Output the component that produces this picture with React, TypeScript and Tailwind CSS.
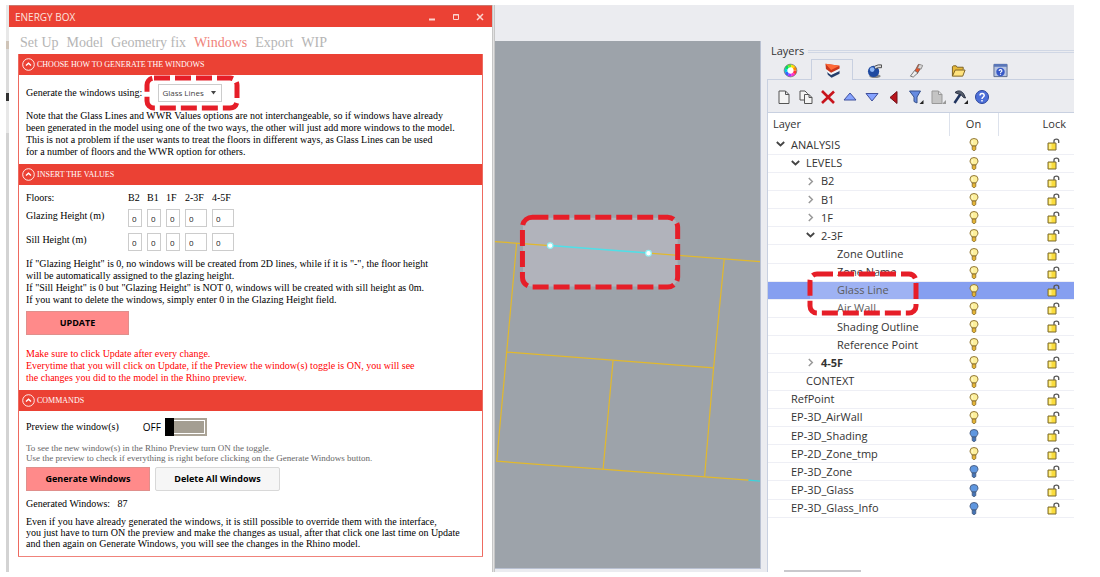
import { useState } from "react";
import type { ReactNode } from "react";

const TABS = ["Set Up", "Model", "Geometry fix", "Windows", "Export", "WIP"];

const FLOORS = [
    { name: "B2", width: "w-[14px]" },
    { name: "B1", width: "w-[14px]" },
    { name: "1F", width: "w-[14px]" },
    { name: "2-3F", width: "w-[22px]" },
    { name: "4-5F", width: "w-[22px]" },
];

type Layer = {
    name: string;
    level: number;
    arrow?: "open" | "closed";
    off?: boolean;
    current?: boolean;
    selected?: boolean;
};

const LAYERS: Layer[] = [
    { name: "ANALYSIS", level: 0, arrow: "open" },
    { name: "LEVELS", level: 1, arrow: "open" },
    { name: "B2", level: 2, arrow: "closed" },
    { name: "B1", level: 2, arrow: "closed" },
    { name: "1F", level: 2, arrow: "closed" },
    { name: "2-3F", level: 2, arrow: "open" },
    { name: "Zone Outline", level: 3 },
    { name: "Zone Name", level: 3 },
    { name: "Glass Line", level: 3, selected: true },
    { name: "Air Wall", level: 3 },
    { name: "Shading Outline", level: 3 },
    { name: "Reference Point", level: 3 },
    { name: "4-5F", level: 2, arrow: "closed", current: true },
    { name: "CONTEXT", level: 1 },
    { name: "RefPoint", level: 0 },
    { name: "EP-3D_AirWall", level: 0 },
    { name: "EP-3D_Shading", level: 0, off: true },
    { name: "EP-2D_Zone_tmp", level: 0 },
    { name: "EP-3D_Zone", level: 0, off: true },
    { name: "EP-3D_Glass", level: 0, off: true },
    { name: "EP-3D_Glass_Info", level: 0, off: true },
];

const INDENT = ["pl-[8px]", "pl-[23px]", "pl-[38px]", "pl-[54px]"];

function Bulb({ off }: { off?: boolean }) {
    return (
        <svg width="10" height="13" viewBox="0 0 10 13" className="mx-auto block">
            <path
                d="M3 8C2.500 6.500 1 6 1 4a4 3.500 0 0 1 8 0C9 6 7.500 6.500 7 8Z"
                fill={off ? "#5f97e0" : "#fdf09c"}
                stroke={off ? "#4c6288" : "#93793a"}
            />
            <path d="M3.200 8h3.600v3.300L5.800 12.500H4.200L3.200 11.300Z" fill={off ? "#4473b5" : "#e5b535"} stroke={off ? "#455878" : "#80672d"} strokeWidth=".8" />
            {!off && <path d="M4 2.500C3 3 3 4.500 3.500 5.500" stroke="#fffbe0" fill="none" />}
        </svg>
    );
}

function Padlock() {
    return (
        <svg width="13" height="13" viewBox="0 0 13 13" className="block">
            <path d="M7 5.500V3C7 .5 11.700.5 11.700 3v2" fill="none" stroke="#555" strokeWidth="1.300" />
            <path d="M1 5h8v7H1Z" fill="#fadc3c" stroke="#7a6b34" />
            <path d="M2 6h2.500v5H2Z" fill="#fff08c" />
        </svg>
    );
}

function Arrow({ state }: { state?: "open" | "closed" }) {
    return (
        <svg width="9" height="9" viewBox="0 0 9 9" className="shrink-0">
            {state === "open" && <path d="M.8 2 4.500 5.500 8.200 2" fill="none" stroke="#444" strokeWidth="1.800" />}
            {state === "closed" && <path d="M2.800 1 6.300 4.500 2.800 8" fill="none" stroke="#999" strokeWidth="1.500" />}
        </svg>
    );
}

function Marker({ className, width, height, fill = "none" }: { className: string; width: number; height: number; fill?: string }) {
    return (
        <svg className={`pointer-events-none absolute z-10 ${className}`} width={width} height={height}>
            <rect x="3" y="3" width={width - 6} height={height - 6} rx="7" fill={fill} stroke="#e61e28" strokeWidth="5" strokeDasharray="16 5" />
        </svg>
    );
}

function Section({ title, children }: { title: string; children: ReactNode }) {
    const [open, setOpen] = useState(true);

    return (
        <section className="border-x border-[#ee6a60]">
            <button
                type="button"
                aria-expanded={open}
                onClick={() => setOpen(!open)}
                className="flex h-[21px] w-full items-center gap-[2px] bg-[#eb4134] pl-[3px] text-[8px] text-white"
            >
                <svg width="13" height="13" viewBox="0 0 13 13">
                    <circle cx="6.500" cy="6.500" r="5.800" fill="none" stroke="#fff" strokeWidth=".9" />
                    <path d="M4 7.600 6.500 5.300 9 7.600" fill="none" stroke="#fff" strokeWidth="1.400" />
                </svg>
                {title}
            </button>
            {open && <div className="px-[7px]">{children}</div>}
        </section>
    );
}

function ValueRow({ label }: { label: string }) {
    return (
        <tr className="h-6">
            <th scope="row" className="w-[102px] pb-1 text-left font-normal">{label}</th>
            {FLOORS.map((floor) => (
                <td key={floor.name} className="pr-[5px]">
                    <input
                        aria-label={`${label} ${floor.name}`}
                        defaultValue="0"
                        className={`block h-[18px] border border-[#ccc] bg-white pl-[3px] font-['Open_Sans',sans-serif] text-[8px] text-[#222] ${floor.width}`}
                    />
                </td>
            ))}
        </tr>
    );
}

function EnergyBox() {
    const [tab, setTab] = useState("Windows");

    return (
        <div className="w-[483px] shrink-0 bg-white pb-[15px] font-['Liberation_Serif',serif] text-[10px] leading-3 text-black">
            <header className="flex h-[22px] items-center border-t border-[#c9786f] bg-[#eb4134] px-[6px] font-['Open_Sans',sans-serif] text-[#fbe3df]">
                <h1 className="text-[10px]">ENERGY BOX</h1>
                <div className="ml-auto flex items-center gap-3">
                    <button type="button" aria-label="Minimize">
                        <svg width="12" height="12"><path d="M3 8.500h6" stroke="#fbd5d0" strokeWidth="2" /></svg>
                    </button>
                    <button type="button" aria-label="Maximize">
                        <svg width="12" height="12"><path d="M3.500 3.500h5v5h-5ZM3 4h6" fill="none" stroke="#fbd5d0" /></svg>
                    </button>
                    <button type="button" aria-label="Close">
                        <svg width="12" height="12"><path d="m3 3 6 6M9 3 3 9" stroke="#fbd5d0" strokeWidth="1.500" /></svg>
                    </button>
                </div>
            </header>

            <nav className="flex h-[27px] items-end gap-2 px-[11px] pb-[3px] text-[14px] leading-4">
                {TABS.map((name) => (
                    <button
                        key={name}
                        type="button"
                        onClick={() => setTab(name)}
                        className={tab === name ? "text-[#f0837b]" : "text-[#b5b5b5]"}
                    >
                        {name}
                    </button>
                ))}
            </nav>

            <div className="mx-[9px] border-b border-[#f0837b]">
                <Section title="CHOOSE HOW TO GENERATE THE WINDOWS">
                    <div className="flex h-[35px] items-center gap-4">
                        <label htmlFor="method">Generate the windows using:</label>
                        <div className="relative">
                            <select
                                id="method"
                                className="block h-[18px] w-16 appearance-none border border-[#ccc] bg-white pl-[3px] font-['Open_Sans',sans-serif] text-[8px] text-[#444]"
                            >
                                <option>Glass Lines</option>
                                <option>WWR Values</option>
                            </select>
                            <svg width="5" height="4" className="pointer-events-none absolute right-[6px] top-[7px]">
                                <path d="M0 0h5L2.500 3.500Z" fill="#444" />
                            </svg>
                            <Marker className="-left-[14px] -top-[9px]" width={96} height={36} />
                        </div>
                    </div>
                    <p className="pb-[6px]">
                        Note that the Glass Lines and WWR Values options are not interchangeable, so if windows have already<br />
                        been generated in the model using one of the two ways, the other will just add more windows to the model.<br />
                        This is not a problem if the user wants to treat the floors in different ways, as Glass Lines can be used<br />
                        for a number of floors and the WWR option for others.
                    </p>
                </Section>

                <Section title="INSERT THE VALUES">
                    <table className="mt-[5px]">
                        <thead>
                            <tr className="h-4">
                                <th scope="col" className="text-left font-normal">Floors:</th>
                                {FLOORS.map((floor) => (
                                    <th key={floor.name} scope="col" className="text-left font-normal">{floor.name}</th>
                                ))}
                            </tr>
                        </thead>
                        <tbody>
                            <ValueRow label="Glazing Height (m)" />
                            <ValueRow label="Sill Height (m)" />
                        </tbody>
                    </table>
                    <p className="pt-1">
                        If "Glazing Height" is 0, no windows will be created from 2D lines, while if it is "-", the floor height<br />
                        will be automatically assigned to the glazing height.<br />
                        If "Sill Height" is 0 but "Glazing Height" is NOT 0, windows will be created with sill height as 0m.<br />
                        If you want to delete the windows, simply enter 0 in the Glazing Height field.
                    </p>
                    <button type="button" className="mt-[5px] block h-6 w-[103px] border border-[#e08f8c] bg-[#ff8a8a] font-['Open_Sans',sans-serif] text-[9px] font-bold">
                        UPDATE
                    </button>
                    <p className="pb-[6px] pt-[13px] text-[#f00]">
                        Make sure to click Update after every change.<br />
                        Everytime that you will click on Update, if the Preview the window(s) toggle is ON, you will see<br />
                        the changes you did to the model in the Rhino preview.
                    </p>
                </Section>

                <Section title="COMMANDS">
                    <div className="flex h-8 items-center">
                        <label htmlFor="preview">Preview the window(s)</label>
                        <span className="ml-6 mr-1 font-['Open_Sans',sans-serif] text-[10px]">OFF</span>
                        <input
                            id="preview"
                            type="checkbox"
                            className="h-[18px] w-[42px] appearance-none border-2 border-[#aaa396] bg-[#a49e92] shadow-[inset_0_0_0_1px_#fff] before:-ml-[2px] before:-mt-[2px] before:block before:h-[18px] before:w-[9px] before:bg-black checked:before:ml-[31px]"
                        />
                    </div>
                    <p className="text-[9px] leading-[10px] text-[#666]">
                        To see the new window(s) in the Rhino Preview turn ON the toggle.<br />
                        Use the preview to check if everything is right before clicking on the Generate Windows button.
                    </p>
                    <div className="mt-1 flex gap-[5px] font-['Open_Sans',sans-serif] text-[9px] font-bold">
                        <button type="button" className="h-6 w-[124px] border border-[#e08f8c] bg-[#ff8a8a]">Generate Windows</button>
                        <button type="button" className="h-6 w-[125px] rounded-[2px] border border-[#d8d8d8] bg-[#f6f6f6]">Delete All Windows</button>
                    </div>
                    <p className="mt-[7px]">Generated Windows: &nbsp; 87</p>
                    <p className="pb-[7px] pt-[6px] leading-[11px]">
                        Even if you have already generated the windows, it is still possible to override them with the interface,<br />
                        you just have to turn ON the preview and make the changes as usual, after that click one last time on Update<br />
                        and then again on Generate Windows, you will see the changes in the Rhino model.
                    </p>
                </Section>
            </div>
        </div>
    );
}

function Viewport() {
    return (
        <div className="flex min-w-0 flex-1 flex-col bg-[#ebecf0] pb-[3px]">
            <div className="h-9" />
            <div className="relative flex-1 border-b border-r border-[#b9c1d2] bg-[#9da3aa]">
                <svg className="absolute inset-0 h-full w-full" viewBox="495 41 266 528" preserveAspectRatio="xMinYMin slice">
                    <rect x="523" y="218" width="155" height="69" rx="9" fill="#b1b3bb" />
                    <g stroke="#e2b92c" strokeWidth="1.200" fill="none">
                        <path d="M495 242 550 246M649 253.500 761 262" />
                        <path d="M516.700 243.500 506.700 352.700 496.700 462 749 481" />
                        <path d="M506.700 352.700 714 368.500M613.300 361 603.300 470M724.700 259.300 714 368.500 705 477.300" />
                    </g>
                    <path d="M550 246 649 253.500" stroke="#4fe0e8" strokeWidth="1.500" />
                    <path d="M749 481 761 482" stroke="#3bd3dc" strokeWidth="1.200" />
                    <g fill="#fff" stroke="#8df2f5" strokeWidth="1.200">
                        <circle cx="550.300" cy="246" r="2.800" />
                        <circle cx="648.800" cy="253.600" r="2.800" />
                    </g>
                    <rect x="522.500" y="217.500" width="155.500" height="70" rx="10" fill="none" stroke="#e61e28" strokeWidth="5" strokeDasharray="16 5" />
                </svg>
            </div>
        </div>
    );
}

const WHEEL = ["#f33", "#f3c", "#a3f", "#36f", "#0cd", "#0d6", "#6e2", "#fd0", "#f80"];

const PANEL_TABS = [
    {
        name: "Properties",
        icon: (
            <>
                <circle cx="8" cy="8" r="5" fill="#fff" />
                {WHEEL.map((color, i) => (
                    <circle key={color} cx="8" cy="8" r="5" fill="none" stroke={color} strokeWidth="3.200" pathLength="90" strokeDasharray="10 80" strokeDashoffset={-i * 10} />
                ))}
                <circle cx="8" cy="8" r="6.800" fill="none" stroke="#555" strokeWidth=".6" />
            </>
        ),
    },
    {
        name: "Layers",
        icon: (
            <>
                <path d="M2 8.500 6.500 12 15.500 8v3.500L7 15.800 3 12.500Z" fill="#27406c" />
                <path d="M1.500 6.500 6.500 10 15.500 5.500V8.500L6.500 12.800 2 9.500Z" fill="#f4f6fa" />
                <path d="M.5.8 15.500 2.800v3L6.500 10.300 1 6.500Z" fill="#c9361c" />
                <path d="M.5.8 15.500 2.800 6.500 7.500Z" fill="#ff6a38" />
            </>
        ),
    },
    {
        name: "Environment",
        icon: (
            <>
                <ellipse cx="8.500" cy="14" rx="6" ry="2" fill="#888" />
                <circle cx="7" cy="9" r="6" fill="#1f4aa0" />
                <circle cx="5.500" cy="7" r="2.500" fill="#8db6f5" />
                <path d="M8 3.500 12 2h3.500v3H12L9 6" fill="#ddd" stroke="#444" />
            </>
        ),
    },
    {
        name: "Materials",
        icon: (
            <>
                <path d="M10 1.500 14 3 9 11l-3-2Z" fill="#e9552a" stroke="#6b4a40" strokeWidth=".8" />
                <path d="m11 1.500 3.500 1-1.500 4-4-1Z" fill="#d8d8d8" stroke="#666" strokeWidth=".6" />
                <path d="M6 8 9.500 10.500 4.500 15 1.500 14Z" fill="#eee" stroke="#555" strokeWidth=".8" />
            </>
        ),
    },
    {
        name: "Libraries",
        icon: (
            <>
                <path d="M1.500 14V4l1-1h3l1 1.500H13V7" fill="#e6b93c" stroke="#795e20" />
                <path d="M1.500 14 4.500 7.500H15L12.500 14Z" fill="#ffe37e" stroke="#795e20" />
            </>
        ),
    },
    {
        name: "Help",
        icon: (
            <>
                <path d="M1 1.500h14v13H1Z" fill="#b6c4e2" stroke="#5a6a8c" />
                <path d="M1 1h14v3H1Z" fill="#5976b8" />
                <circle cx="8" cy="9.500" r="4.500" fill="#3759c8" />
                <path d="M6.500 8.500c0-2 3-2 3 0 0 1-1.500 1-1.500 2.200M8 11.500v1" fill="none" stroke="#fff" strokeWidth="1.200" />
            </>
        ),
    },
];

const TOOLS = [
    { name: "New layer", icon: <path d="M3 2h6.500L13 5.500V14.500H3ZM9.500 2v3.500H13" fill="#f4f4f4" stroke="#555" /> },
    {
        name: "New sublayer",
        icon: (
            <>
                <path d="M2 2h5l2.500 2.500V11H2Z" fill="#f4f4f4" stroke="#555" />
                <path d="M6.500 5.500H11L14 8.500v6H6.500ZM11 5.500v3h3" fill="#f4f4f4" stroke="#555" />
            </>
        ),
    },
    { name: "Delete", icon: <path d="m2 2 12 12M14 2.500 2 14" stroke="#c8141c" strokeWidth="2.600" fill="none" /> },
    { name: "Move up", icon: <path d="M8 4 14 11H2Z" fill="#86a3ff" stroke="#40509c" /> },
    { name: "Move down", icon: <path d="M2 4.500h12L8 12Z" fill="#86a3ff" stroke="#40509c" /> },
    { name: "Move up one parent", icon: <path d="M11 2.500v12L4 8.500Z" fill="#b9141c" stroke="#701018" /> },
    {
        name: "Filter",
        icon: (
            <>
                <path d="M1.500 2h11L9 8v6l-3-1.500V8Z" fill="#668be0" stroke="#34508c" />
                <path d="M15.500 11v4h-4Z" fill="#222" />
            </>
        ),
    },
    {
        name: "State",
        icon: (
            <>
                <path d="M2 2h6.500L12 5.500V14.500H2ZM8.500 2v3.500H12" fill="#c4c4c4" stroke="#999" />
                <path d="M16 11v4h-4Z" fill="#999" />
            </>
        ),
    },
    {
        name: "Tools",
        icon: (
            <>
                <path d="M8.500 5 2.500 14" stroke="#1f335f" strokeWidth="2.500" />
                <path d="M3 3.500C6 1 9 1.500 11.500 4.500L13.500 9l-2-.5L9.500 6 6.500 5Z" fill="#555d6c" stroke="#283044" />
                <path d="M16 11v4h-4Z" fill="#222" />
            </>
        ),
    },
    {
        name: "Help",
        icon: (
            <>
                <circle cx="8" cy="8" r="6.500" fill="#4d6fd8" stroke="#2b469c" />
                <path d="M6 6.500c0-3 4.200-2.600 4.200 0C10.200 8 8 8 8 10M8 11v1.500" fill="none" stroke="#fff" strokeWidth="1.500" />
            </>
        ),
    },
];

function LayerPanel() {
    const [selected, setSelected] = useState("Layers");

    return (
        <aside className="flex w-[313px] shrink-0 flex-col bg-[#ebecf0] pl-[6px] font-['Open_Sans',sans-serif] text-[11px] text-[#333]">
            <div className="mt-[38px] flex h-4 items-center gap-1 pl-[4px]">
                <h2>Layers</h2>
                <div className="h-[3px] flex-1 border-y border-[#d0d7e5]" />
            </div>
            <div className="flex items-end pl-[2px] shadow-[inset_0_-1px_0_#c8d0e0]">
                {PANEL_TABS.map(({ name, icon }) => (
                    <button
                        key={name}
                        type="button"
                        aria-label={name}
                        onClick={() => setSelected(name)}
                        className={`flex h-[21px] w-[42px] items-center justify-center border-x border-t ${
                            selected === name ? "border-[#c8d0e0] bg-[#ebecf0]" : "border-transparent"
                        }`}
                    >
                        <svg width="15" height="15" viewBox="0 0 16 16">{icon}</svg>
                    </button>
                ))}
            </div>
            <div className="flex flex-1 flex-col border-l border-[#c8d0e0]">
                <div className="flex h-[33px] items-center gap-[6px] border-b border-[#c8d0e0] pl-[8px] pt-px">
                    {TOOLS.map(({ name, icon }) => (
                        <button key={name} type="button" aria-label={name}>
                            <svg width="16" height="16" viewBox="0 0 16 16" className="block">{icon}</svg>
                        </button>
                    ))}
                </div>
                <div className="flex-1 bg-white">
                    <table className="h-[405px] w-full table-fixed border-collapse">
                        <thead>
                            <tr className="h-[23px]">
                                <th scope="col" className="border-r border-[#dde2ec] pl-[5px] text-left font-normal">Layer</th>
                                <th scope="col" className="w-[49px] border-r border-[#dde2ec] text-center font-normal">On</th>
                                <th scope="col" className="w-[76px] pr-2 text-right font-normal">Lock</th>
                            </tr>
                        </thead>
                        <tbody className="leading-4">
                            {LAYERS.map((layer) => (
                                <tr key={layer.name} className={`h-[18px] border-b border-[#eeeff5] ${layer.selected ? "bg-[#869ff0]" : ""}`}>
                                    <td className={`p-0 ${INDENT[layer.level]}`}>
                                        <div className="relative flex items-center gap-[6px]">
                                            <Arrow state={layer.arrow} />
                                            <span className={layer.current ? "font-bold" : ""}>{layer.name}</span>
                                            {layer.selected && (
                                                <Marker className="-left-[15px] -top-[11px]" width={112} height={45} fill="rgba(255,255,255,.2)" />
                                            )}
                                        </div>
                                    </td>
                                    <td className="p-0"><Bulb off={layer.off} /></td>
                                    <td className="p-0 pl-[49px]"><Padlock /></td>
                                </tr>
                            ))}
                        </tbody>
                    </table>
                </div>
                <div className="bg-white pl-4">
                    <div className="h-[2px] w-[77px] bg-[#c9c9cd]" />
                </div>
            </div>
        </aside>
    );
}

export default function App() {
    return (
        <main className="flex min-h-screen bg-white py-[5px] pl-[6px] pr-[26px]">
            <div className="flex w-[3px] shrink-0 flex-col bg-[#d3d3d3]">
                <div className="h-9 bg-[#e8e8e8]" />
                <div className="h-2 bg-[#cfc4b8]" />
                <div className="h-11 bg-[#dcdcdc]" />
                <div className="h-2 bg-[#333]" />
                <div className="h-8 bg-[#e8e8e8]" />
            </div>
            <EnergyBox />
            <div className="w-[3px] shrink-0 border-x border-[#c6c6c6] bg-[#e2e2e2]" />
            <Viewport />
            <LayerPanel />
        </main>
    );
}
